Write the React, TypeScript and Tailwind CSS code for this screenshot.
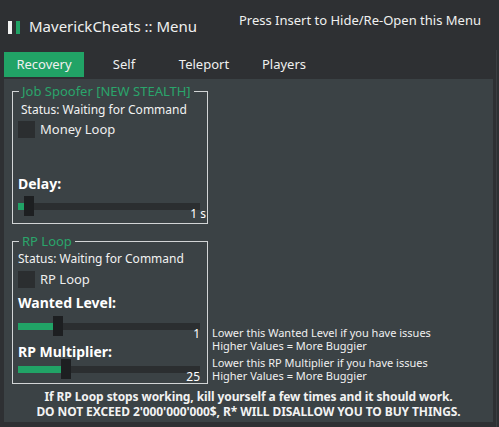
import type { ReactNode } from "react";

function Slider({
  pos,
  value,
  valueRight = 0,
}: {
  pos: number;
  value: string;
  valueRight?: number;
}) {
  return (
    <div className="relative h-[20px] w-[182px]">
      <div className="absolute left-0 right-0 top-[7px] h-[7px] bg-[#2b2e30]" />
      <div
        className="absolute left-0 top-[7px] h-[7px] bg-[#21a366]"
        style={{ width: pos }}
      />
      <div
        className="absolute top-0 h-[20px] w-[10px] bg-[#1d1f21]"
        style={{ left: pos }}
      />
      <span
        className="absolute top-[12px] text-[12px] leading-[12px] text-white"
        style={{ right: valueRight }}
      >
        {value}
      </span>
    </div>
  );
}

function Checkbox({ label }: { label: string }) {
  return (
    <div className="flex h-[17px] items-center">
      <div className="h-[17px] w-[17px] bg-[#2b2e30]" />
      <span className="ml-[5px] text-[13px] leading-[17px] text-[#eeeeee]">{label}</span>
    </div>
  );
}

function Group({
  title,
  height,
  children,
}: {
  title: string;
  height: number;
  children: ReactNode;
}) {
  return (
    <fieldset
      className="box-border w-[196px] shrink-0 border border-[#d2d5d6] px-[5px] pb-0 pt-0"
      style={{ height }}
    >
      <legend className="ml-[1px] px-[3px] text-[13px] leading-[14px] text-[#2aa56b]">
        {title}
      </legend>
      {children}
    </fieldset>
  );
}

export default function App() {
  const tabs = ["Recovery", "Self", "Teleport", "Players"];

  return (
    <div className="relative h-[427px] w-[499px] overflow-hidden bg-[#2e3033] font-['Noto_Sans',sans-serif] text-white">
      <div className="absolute right-[2px] top-[50px] h-[377px] w-px bg-[#3a3e41]" />

      {/* header */}
      <div className="flex h-[52px]">
        <div className="ml-[8px] mt-[21px] flex h-[13px] gap-[4px]">
          <div className="w-[4px] bg-[#f2f2f2]" />
          <div className="w-[4px] bg-[#21a366]" />
        </div>
        <div className="ml-[9px] mt-[16px] text-[15px] leading-[20px] text-[#f0f0f0]">
          MaverickCheats :: Menu
        </div>
        <div className="ml-auto mr-[18px] mt-[12px] text-[13px] leading-[16px] text-[#f0f0f0]">
          Press Insert to Hide/Re-Open this Menu
        </div>
      </div>

      {/* tabs */}
      <div className="ml-[4px] flex h-[25px]">
        {tabs.map((t, i) => (
          <div
            key={t}
            className={
              "flex w-[80px] items-center justify-center text-[13px] text-[#f0f0f0] " +
              (i === 0 ? "bg-[#21a366]" : "")
            }
          >
            {t}
          </div>
        ))}
      </div>

      {/* panel */}
      <div className="ml-[4px] mt-[2px] h-[343px] w-[489px] bg-[#3b4245] px-[8px] pt-[5px]">
        <Group title="Job Spoofer [NEW STEALTH]" height={140}>
          <div className="mt-[5px] pl-[3px] text-[12px] leading-[14px] text-[#f2f2f2]">
            Status: Waiting for Command
          </div>
          <div className="mt-[4px]">
            <Checkbox label="Money Loop" />
          </div>
          <div className="mt-[38px] text-[14px] font-bold leading-[16px]">Delay:</div>
          <div className="mt-[4px]">
            <Slider pos={6} value="1 s" valueRight={-6} />
          </div>
        </Group>

        <div className="mt-[10px] flex">
          <Group title="RP Loop" height={150}>
            <div className="mt-[4px] text-[12px] leading-[14px] text-[#f2f2f2]">
              Status: Waiting for Command
            </div>
            <div className="mt-[5px]">
              <Checkbox label="RP Loop" />
            </div>
            <div className="mt-[7px] text-[14px] font-bold leading-[15px]">Wanted Level:</div>
            <div className="mt-[6px]">
              <Slider pos={35} value="1" />
            </div>
            <div className="mt-[8px] text-[14px] font-bold leading-[15px]">RP Multiplier:</div>
            <Slider pos={43} value="25" />
          </Group>

          <div className="ml-[4px] text-[11px] leading-[13px] text-[#f0f0f0]">
            <div className="mt-[92px]">
              Lower this Wanted Level if you have issues
              <br />
              Higher Values = More Buggier
            </div>
            <div className="mt-[4px]">
              Lower this RP Multiplier if you have issues
              <br />
              Higher Values = More Buggier
            </div>
          </div>
        </div>

        <div className="mt-[5px] text-center text-[12px] font-bold leading-[15px] tracking-[-0.1px] text-[#f2f2f2]">
          If RP Loop stops working, kill yourself a few times and it should work.
          <br />
          DO NOT EXCEED 2'000'000'000$, R* WILL DISALLOW YOU TO BUY THINGS.
        </div>
      </div>
    </div>
  );
}
